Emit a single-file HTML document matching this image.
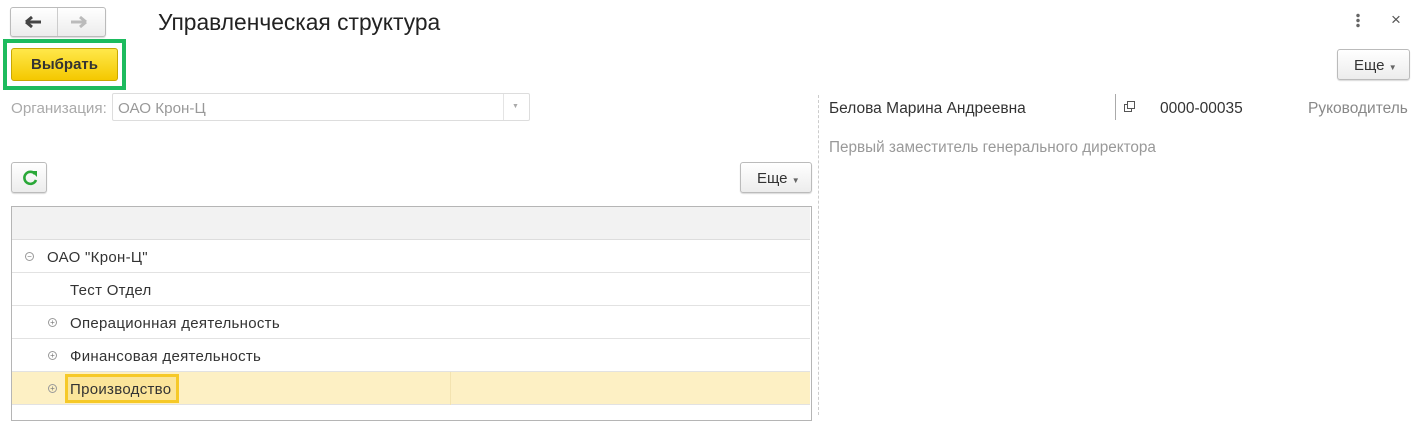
<!DOCTYPE html>
<html><head><meta charset="utf-8"><style>
*{box-sizing:border-box;margin:0;padding:0}
body{width:1418px;height:415px;overflow:hidden;background:#fff;font-family:"Liberation Sans",Arial,sans-serif;font-size:15px;color:#333;position:relative}
.a{position:absolute}
.btn{position:absolute;border:1px solid #bbb;border-radius:3px;background:linear-gradient(#fff,#ececec);box-shadow:0 1px 1px rgba(0,0,0,.15)}
.row{position:absolute;left:12px;width:798px;height:33px;border-bottom:1px solid #e2e2e2}
.row span{position:absolute;top:9px;font-size:15px;letter-spacing:0.3px;color:#333}
.pm{position:absolute;top:12px;width:9px;height:9px;border:1px solid #999;border-radius:50%;font-size:8px;line-height:7px;text-align:center;color:#777}
</style></head><body>
<div class="btn" style="left:10px;top:7px;width:96px;height:30px"></div>
<div class="a" style="left:57px;top:8px;width:1px;height:28px;background:#ccc"></div>
<svg class="a" style="left:24px;top:14px" width="20" height="16"><path d="M2 8h15M2 8l6-5M2 8l6 5" stroke="#444" stroke-width="3" fill="none"/></svg>
<svg class="a" style="left:68px;top:14px" width="20" height="16"><path d="M18 8H3M18 8l-6-5M18 8l-6 5" stroke="#bbb" stroke-width="3" fill="none"/></svg>
<div class="a" style="left:158px;top:9px;font-size:22.8px;color:#222">Управленческая структура</div>
<div class="a" style="left:1356px;top:13px;width:4px;height:15px;background:radial-gradient(circle,#666 1.5px,transparent 2px) 0 0/4px 5px"></div>
<div class="a" style="left:1391px;top:10px;font-size:17px;color:#555">×</div>
<div class="a" style="left:3px;top:39px;width:123px;height:51px;border:4px solid #1dbb5e"></div>
<div class="a" style="left:11px;top:48px;width:107px;height:33px;border:1px solid #c9a800;border-radius:3px;background:linear-gradient(#ffe84a,#f4c800);font-weight:bold;font-size:15px;color:#333;text-align:center;line-height:31px">Выбрать</div>
<div class="btn" style="left:1337px;top:49px;width:73px;height:31px"></div>
<div class="a" style="left:1354px;top:57px;font-size:15px">Еще <span style="font-size:8px;color:#666">▼</span></div>
<div class="a" style="left:11px;top:100px;color:#aaa;font-size:15.2px">Организация:</div>
<div class="a" style="left:112px;top:93px;width:418px;height:28px;border:1px solid #ddd;border-radius:2px"></div>
<div class="a" style="left:503px;top:94px;width:1px;height:26px;background:#e4e4e4"></div>
<div class="a" style="left:512px;top:103px;font-size:7px;color:#aaa">▼</div>
<div class="a" style="left:118px;top:100px;color:#999;font-size:15.2px">ОАО Крон-Ц</div>
<div class="btn" style="left:11px;top:162px;width:36px;height:31px"></div>
<svg class="a" style="left:20px;top:168px" width="20" height="20"><path d="M15 6A6 6 0 1 0 16 12" stroke="#2aa838" stroke-width="2.6" fill="none"/><path d="M11 3l6 0 0 6z" fill="#2aa838"/></svg>
<div class="btn" style="left:740px;top:162px;width:72px;height:31px"></div>
<div class="a" style="left:757px;top:170px;font-size:15px">Еще <span style="font-size:8px;color:#666">▼</span></div>
<div class="a" style="left:11px;top:206px;width:801px;height:215px;border:1px solid #b5b5b5"></div>
<div class="a" style="left:12px;top:207px;width:798px;height:33px;background:#f2f2f2;border-bottom:1px solid #ddd"></div>
<div class="row" style="top:240px"><div class="pm" style="left:13px">−</div><span style="left:35px">ОАО "Крон-Ц"</span></div>
<div class="row" style="top:273px"><span style="left:58px">Тест Отдел</span></div>
<div class="row" style="top:306px"><div class="pm" style="left:36px">+</div><span style="left:58px">Операционная деятельность</span></div>
<div class="row" style="top:339px"><div class="pm" style="left:36px">+</div><span style="left:58px">Финансовая деятельность</span></div>
<div class="row" style="top:372px;background:#fdf0c4"><div class="a" style="left:438px;top:0;width:1px;height:33px;background:#f3e3b0"></div><div class="pm" style="left:36px">+</div><div class="a" style="left:53px;top:2px;width:114px;height:29px;border:3px solid #f6c928;background:#fbe59a"></div><span style="left:58px">Производство</span></div>
<div class="a" style="left:818px;top:95px;width:0;height:320px;border-left:1px dashed #ccc"></div>
<div class="a" style="left:829px;top:100px;color:#333;font-size:15.5px">Белова Марина Андреевна</div>
<div class="a" style="left:1115px;top:94px;width:1px;height:26px;background:#aaa"></div>
<div class="a" style="left:1124px;top:104px;width:8px;height:8px;border:1px solid #555;background:#fff"></div>
<div class="a" style="left:1127px;top:101px;width:8px;height:8px;border:1px solid #555;background:#fff"></div>
<div class="a" style="left:1160px;top:100px;font-size:15.5px">0000-00035</div>
<div class="a" style="left:1308px;top:100px;font-size:15.5px;color:#888">Руководитель</div>
<div class="a" style="left:829px;top:139px;font-size:15.3px;color:#999">Первый заместитель генерального директора</div>
</body></html>
